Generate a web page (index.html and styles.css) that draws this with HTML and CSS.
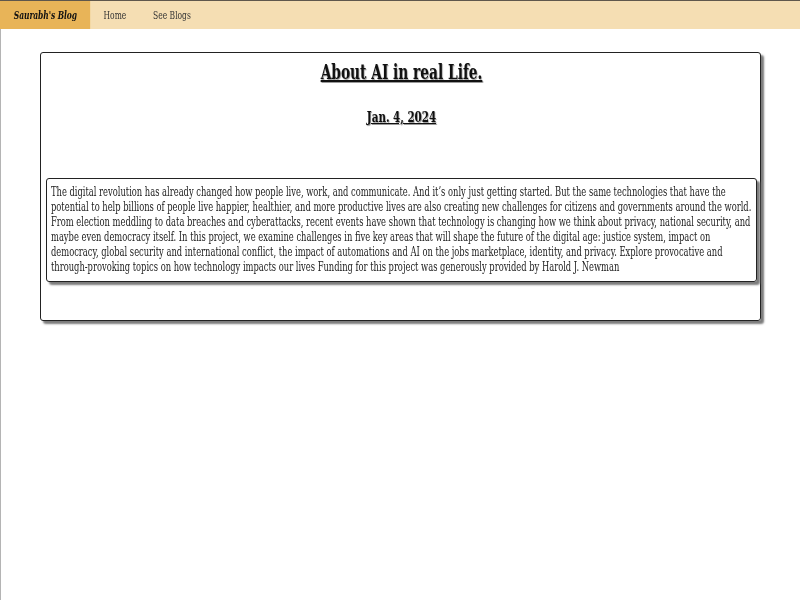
FILE: index.html
```html
<!DOCTYPE html>
<html lang="en">
<head>
<meta charset="utf-8">
<title>Saurabh's Blog</title>
<link rel="stylesheet" href="styles.css">
</head>
<body>
<nav class="nav">
  <div class="nav-row">
    <a class="brand" href="#">Saurabh's Blog</a>
    <a class="link" href="#">Home</a>
    <a class="link" href="#">See Blogs</a>
  </div>
</nav>
<main class="page">
  <article class="card">
    <h1 class="title">About AI in real Life.</h1>
    <h2 class="date">Jan. 4, 2024</h2>
    <div class="content">
      <p class="content-text">The digital revolution has already changed how people live, work, and communicate. And it’s only just getting started. But the same technologies that have the potential to help billions of people live happier, healthier, and more productive lives are also creating new challenges for citizens and governments around the world. From election meddling to data breaches and cyberattacks, recent events have shown that technology is changing how we think about privacy, national security, and maybe even democracy itself. In this project, we examine challenges in five key areas that will shape the future of the digital age: justice system, impact on democracy, global security and international conflict, the impact of automations and AI on the jobs marketplace, identity, and privacy. Explore provocative and through-provoking topics on how technology impacts our lives Funding for this project was generously provided by Harold J. Newman</p>
    </div>
  </article>
</main>
</body>
</html>
```
FILE: styles.css
```css
:root {
  --sx: 0.764;
  --sx-body: 0.772;
}

html, body {
  margin: 0;
  padding: 0;
  height: 100%;
  background: #ffffff;
  font-family: "DejaVu Serif Condensed", "DejaVu Serif", serif;
}

.nav {
  height: 28px;
  background: #f5deb3;
  border-top: 1px solid #5f574c;
  overflow: hidden;
}

.nav-row {
  display: flex;
  align-items: stretch;
  height: 100%;
  width: calc(100% / var(--sx));
  transform: scaleX(var(--sx));
  transform-origin: left center;
}

.brand {
  display: flex;
  align-items: center;
  box-sizing: border-box;
  width: 118px;
  padding-left: 18px;
  background: #e8b458;
  color: #111;
  font-weight: bold;
  font-style: italic;
  font-size: 11px;
  letter-spacing: -0.1px;
  text-decoration: none;
}

.link {
  display: flex;
  align-items: center;
  padding: 0 17.5px;
  color: #333;
  font-size: 11px;
  text-decoration: none;
}

.page {
  min-height: calc(100% - 29px);
  border-left: 1px solid #b4b4b4;
  box-sizing: border-box;
  padding-top: 23px;
}

.card {
  width: 721px;
  margin-left: 39px;
  box-sizing: border-box;
  border: 1px solid #222;
  border-radius: 3px;
  box-shadow: 3px 3px 2px #7c7c7c;
  padding: 7px 3px 38px 5px;
}

.title {
  margin: 0;
  text-align: center;
  font-size: 20px;
  line-height: 24px;
  font-weight: bold;
  text-decoration: underline;
  color: #111;
  text-shadow: 1px 1px 1px #9a9a9a;
  transform: scaleX(var(--sx));
}

.date {
  margin: 24px 0 0;
  text-align: center;
  font-size: 15px;
  line-height: 18px;
  font-weight: bold;
  text-decoration: underline;
  color: #111;
  text-shadow: 1px 1px 1px #9a9a9a;
  transform: scaleX(var(--sx));
}

.content {
  margin-top: 52px;
  border: 1px solid #222;
  border-radius: 3px;
  box-shadow: 3px 3px 2px #7c7c7c;
  padding: 6px 0 6px 4px;
}

.content-text {
  margin: 0;
  width: 918px;
  font-size: 12px;
  line-height: 15px;
  color: #222;
  transform: scaleX(var(--sx-body));
  transform-origin: left top;
}
```
